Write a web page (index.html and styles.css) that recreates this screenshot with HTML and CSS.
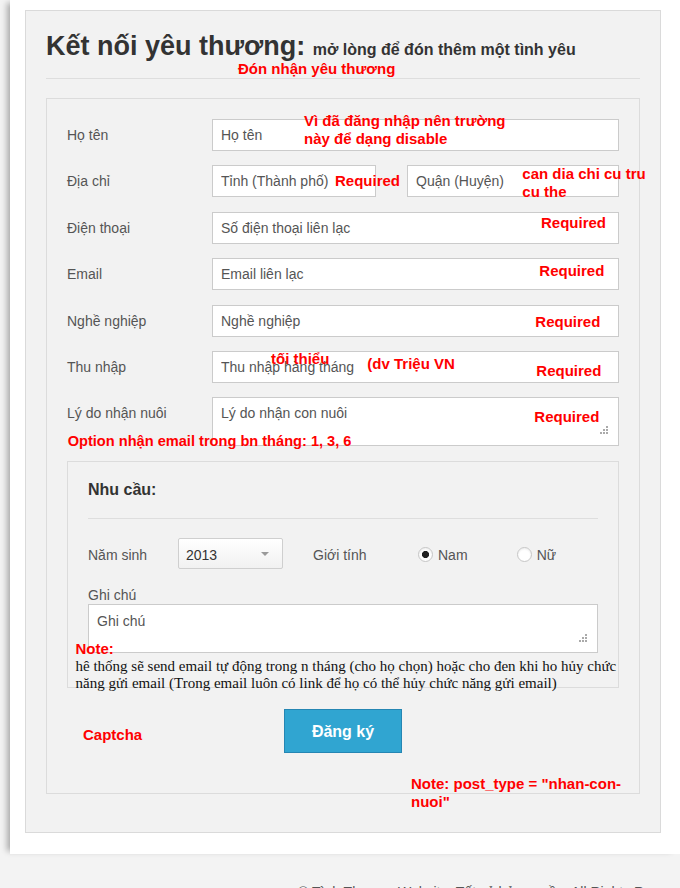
FILE: index.html
```html
<!DOCTYPE html>
<html lang="vi">
<head>
<meta charset="utf-8">
<title>Kết nối yêu thương</title>
<link rel="stylesheet" href="styles.css">
</head>
<body>
<div class="page">
  <div class="panel">
    <h1 class="title">Kết nối yêu thương: <small class="subtitle">mở lòng để đón thêm một tình yêu</small></h1>
    <div class="subnote">Đón nhận yêu thương</div>
    <hr class="rule">
    <form class="form">
      <div class="row">
        <label class="lbl">Họ tên</label>
        <input class="field" type="text" placeholder="Họ tên">
      </div>
      <div class="row">
        <label class="lbl">Địa chỉ</label>
        <div class="pair">
          <input class="field f-city" type="text" placeholder="Tỉnh (Thành phố)">
          <input class="field f-district" type="text" placeholder="Quận (Huyện)">
        </div>
      </div>
      <div class="row">
        <label class="lbl">Điện thoại</label>
        <input class="field" type="text" placeholder="Số điện thoại liên lạc">
      </div>
      <div class="row">
        <label class="lbl">Email</label>
        <input class="field" type="text" placeholder="Email liên lạc">
      </div>
      <div class="row">
        <label class="lbl">Nghề nghiệp</label>
        <input class="field" type="text" placeholder="Nghề nghiệp">
      </div>
      <div class="row">
        <label class="lbl">Thu nhập</label>
        <input class="field" type="text" placeholder="Thu nhập hàng tháng">
      </div>
      <div class="row">
        <label class="lbl">Lý do nhận nuôi</label>
        <div class="area-wrap">
          <textarea class="field area area-reason" placeholder="Lý do nhận con nuôi"></textarea>
          <svg class="grip grip-reason" width="10" height="10" viewBox="0 0 10 10"><g fill="#aaa"><rect x="8" y="1" width="2" height="2"/><rect x="5" y="4" width="2" height="2"/><rect x="8" y="4" width="2" height="2"/><rect x="2" y="7" width="2" height="2"/><rect x="5" y="7" width="2" height="2"/><rect x="8" y="7" width="2" height="2"/></g></svg>
        </div>
      </div>

      <div class="needs">
        <h3 class="needs-title">Nhu cầu:</h3>
        <hr class="needs-rule">
        <div class="needs-row">
          <span class="n-lbl">Năm sinh</span>
          <span class="select-wrap">
            <select class="select"><option>2013</option></select>
            <span class="caret"></span>
          </span>
          <span class="n-lbl n-gender">Giới tính</span>
          <label class="opt opt-male"><input class="radio" type="radio" name="gt" checked><span>Nam</span></label>
          <label class="opt"><input class="radio" type="radio" name="gt"><span>Nữ</span></label>
        </div>
        <div class="note-lbl">Ghi chú</div>
        <div class="area-wrap">
          <textarea class="field area area-note" placeholder="Ghi chú"></textarea>
          <svg class="grip grip-note" width="10" height="10" viewBox="0 0 10 10"><g fill="#aaa"><rect x="8" y="1" width="2" height="2"/><rect x="5" y="4" width="2" height="2"/><rect x="8" y="4" width="2" height="2"/><rect x="2" y="7" width="2" height="2"/><rect x="5" y="7" width="2" height="2"/><rect x="8" y="7" width="2" height="2"/></g></svg>
        </div>
        <div class="mail-note">
          <div class="mail-note-head">Note:</div>
          <div class="mail-note-text">hê thống sẽ send email tự động trong n tháng (cho họ chọn) hoặc cho đen khi ho hủy chức năng gửi email (Trong email luôn có link để họ có thể hủy chức năng gửi email)</div>
        </div>
      </div>

      <div class="submit-row">
        <span class="captcha">Captcha</span>
        <button class="btn" type="button">Đăng ký</button>
      </div>

      <div class="ann a-login">Vì đã đăng nhập nên trường<br>này để dạng disable</div>
      <div class="ann a-req2">Required</div>
      <div class="ann a-addr">can dia chi cu tru<br>cu the</div>
      <div class="ann a-req3">Required</div>
      <div class="ann a-req4">Required</div>
      <div class="ann a-req5">Required</div>
      <div class="ann a-min">tối thiểu</div>
      <div class="ann a-unit">(dv Triệu VN</div>
      <div class="ann a-req6">Required</div>
      <div class="ann a-req7">Required</div>
      <div class="ann a-option">Option nhận email trong bn tháng: 1, 3, 6</div>
      <div class="ann a-post">Note: post_type = "nhan-con-<br>nuoi"</div>
    </form>
  </div>
</div>
<footer class="footer">© Tình Thương Website. Tất cả bản quyền. All Rights Reserved</footer>
</body>
</html>
```

FILE: styles.css
```css
html, body {
  margin: 0;
  height: 888px;
  overflow: hidden;
}
body {
  background: #f3f3f3;
  font-family: "Liberation Sans", Arial, sans-serif;
  color: #555;
}
.page {
  margin-left: 10px;
  background: #fff;
  padding: 10px 19px 21px 15px;
  box-shadow: -6px 0 6px -3px rgba(0, 0, 0, 0.3);
  position: relative;
}
.panel {
  background: #f2f2f2;
  border: 1px solid #dadada;
  padding: 20px 20px 38px 20px;
}
.title {
  margin: 0;
  font-size: 27px;
  line-height: 30px;
  font-weight: bold;
  color: #333;
}
.subtitle {
  font-size: 16px;
  line-height: 16px;
  font-weight: bold;
  color: #333;
}
.subnote {
  padding-left: 192px;
  font-size: 15px;
  line-height: 16px;
  font-weight: bold;
  color: #f00;
}
.rule {
  margin: 1px 0 0;
  border: 0;
  border-top: 1px solid #dedede;
  height: 0;
}
.form {
  position: relative;
  margin: 19px 0 0;
  border: 1px solid #dcdcdc;
  padding: 20px 20px 39.7px 20px;
  display: flex;
  flex-direction: column;
  gap: 14.4px;
}
.row {
  display: flex;
  align-items: flex-start;
}
.lbl {
  width: 145px;
  flex: none;
  font-size: 14px;
  line-height: 32px;
  color: #555;
}
.field {
  box-sizing: border-box;
  height: 32px;
  flex: 1;
  min-width: 0;
  margin: 0;
  border: 1px solid #cbcbcb;
  background: #fff;
  padding: 0 8px;
  font-family: "Liberation Sans", Arial, sans-serif;
  font-size: 14px;
  color: #555;
  outline: none;
}
.field::placeholder {
  color: #555;
  opacity: 1;
}
.pair {
  flex: 1;
  display: flex;
  gap: 31px;
}
.f-city {
  flex: none;
  width: 164px;
  padding-right: 0;
}
.area-wrap {
  position: relative;
  flex: 1;
  display: flex;
}
.area {
  resize: none;
  line-height: 20px;
  display: block;
}
.area-reason {
  height: 49px;
  padding-top: 4.5px;
}
.area-note {
  height: 49px;
  padding-top: 6px;
}
.grip {
  position: absolute;
  display: block;
}
.grip-reason {
  right: 11px;
  bottom: 11px;
}
.grip-note {
  right: 11px;
  bottom: 10px;
}

/* Nhu cau */
.needs {
  position: relative;
  border: 1px solid #dcdcdc;
  padding: 18px 20px 33.7px 20px;
}
.needs-title {
  margin: 0;
  font-size: 16px;
  line-height: 20px;
  font-weight: bold;
  color: #333;
}
.needs-rule {
  margin: 18px 0 0;
  border: 0;
  border-top: 1px solid #dedede;
  height: 0;
}
.needs-row {
  margin-top: 19.5px;
  height: 31px;
  display: flex;
  align-items: center;
  font-size: 14px;
  color: #555;
}
.n-lbl {
  width: 90px;
  flex: none;
  padding-top: 2px;
}
.n-gender {
  width: 105px;
  margin-left: 30px;
}
.select-wrap {
  position: relative;
  width: 105px;
  height: 31px;
  flex: none;
}
.select {
  appearance: none;
  -webkit-appearance: none;
  box-sizing: border-box;
  width: 105px;
  height: 31px;
  margin: 0;
  border: 1px solid #cfcfcf;
  border-radius: 2px;
  background: linear-gradient(#ffffff, #f1f1f1);
  padding: 3px 0 0 7px;
  font-family: "Liberation Sans", Arial, sans-serif;
  font-size: 14px;
  color: #333;
  outline: none;
}
.caret {
  position: absolute;
  left: 83px;
  top: 14px;
  width: 0;
  height: 0;
  border-left: 4.5px solid transparent;
  border-right: 4.5px solid transparent;
  border-top: 4px solid #9a9a9a;
}
.opt {
  display: flex;
  align-items: center;
  gap: 5px;
  padding-top: 2px;
}
.opt-male {
  width: 98.7px;
  flex: none;
}
.radio {
  appearance: none;
  -webkit-appearance: none;
  box-sizing: border-box;
  width: 15px;
  height: 15px;
  margin: 0;
  border: 1px solid #c6c6c6;
  border-radius: 50%;
  background: #fff;
  box-shadow: inset 0 1px 2px rgba(0, 0, 0, 0.08);
}
.radio:checked {
  background: radial-gradient(circle, #222 0, #222 3.2px, #fff 3.9px);
}
.note-lbl {
  margin-top: 18px;
  font-size: 14px;
  line-height: 16px;
  color: #555;
}
.needs .area-wrap {
  margin-top: 1px;
}
.mail-note {
  position: absolute;
  left: 7.5px;
  top: 176.8px;
  width: 552px;
}
.mail-note-head {
  font-size: 15px;
  line-height: 19px;
  font-weight: bold;
  color: #f00;
}
.mail-note-text {
  font-family: "Liberation Serif", "Times New Roman", serif;
  font-size: 15px;
  line-height: 17px;
  color: #111;
}

/* submit */
.submit-row {
  margin-top: 6.9px;
  display: flex;
  align-items: flex-start;
}
.captcha {
  margin: 16.5px 0 0 16px;
  width: 201px;
  flex: none;
  font-size: 15px;
  line-height: 18px;
  font-weight: bold;
  color: #f00;
}
.btn {
  box-sizing: border-box;
  width: 118px;
  height: 44px;
  margin: 0;
  border: 1px solid #2586b3;
  background: #30a5d1;
  color: #fff;
  font-family: "Liberation Sans", Arial, sans-serif;
  font-size: 16px;
  font-weight: bold;
  line-height: 20px;
  padding: 12px 0 10px;
}

/* red annotations */
.ann {
  position: absolute;
  font-size: 15px;
  line-height: 17.5px;
  font-weight: bold;
  color: #f00;
  white-space: nowrap;
}
.a-login { left: 257px; top: 13px; }
.a-req2 { left: 288px; top: 72.7px; }
.a-addr { left: 475.3px; top: 66px; }
.a-req3 { left: 494px; top: 115px; }
.a-req4 { left: 492.3px; top: 163px; }
.a-req5 { left: 488.3px; top: 213.7px; }
.a-min { left: 224px; top: 250.5px; }
.a-unit { left: 320.3px; top: 256px; }
.a-req6 { left: 489.3px; top: 262.7px; }
.a-req7 { left: 487.3px; top: 308.7px; }
.a-option { left: 20.7px; top: 334.3px; font-size: 14.6px; }
.a-post { left: 364px; top: 676.3px; }

.footer {
  padding: 28px 0 0 298px;
  font-size: 14px;
  line-height: 20px;
  color: #555;
  white-space: nowrap;
}
```
